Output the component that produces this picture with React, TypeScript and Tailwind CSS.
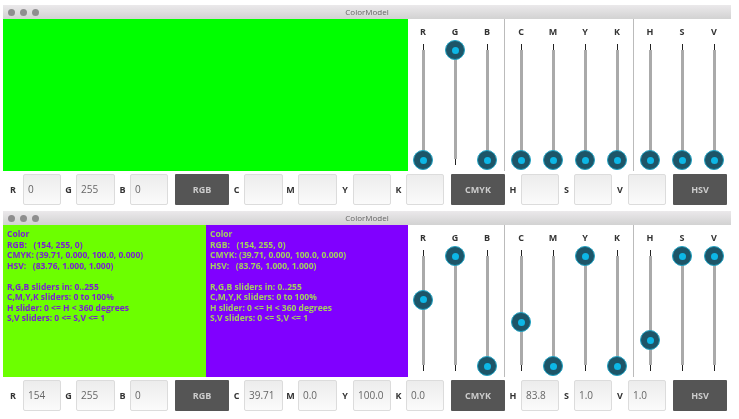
const sans = { fontFamily: '"Open Sans", "DejaVu Sans", sans-serif' };

function TitleBar() {
  return (
    <div className="relative flex h-[14px] items-center gap-[5px] bg-gradient-to-b from-[#ebe9eb] to-[#d2d2d2] pl-[5px]">
      <span className="h-[7px] w-[7px] rounded-full bg-[#8e8e8e]" />
      <span className="h-[7px] w-[7px] rounded-full bg-[#8e8e8e]" />
      <span className="h-[7px] w-[7px] rounded-full bg-[#8e8e8e]" />
      <span className="absolute inset-0 flex items-center justify-center text-[8px] text-[#666]">ColorModel</span>
    </div>
  );
}

function Slider({ label, value }: { label: string; value: number }) {
  return (
    <div className="flex w-[32px] flex-col items-center">
      <div className="flex h-[25px] items-center text-[9px] font-bold text-[#333]">{label}</div>
      <div className="relative h-[121px] w-px bg-[#222]">
        <div className="absolute inset-x-[-1px] top-[6px] bottom-[6px] bg-[#aaa]" />
        <div
          className="absolute left-1/2 flex h-[20px] w-[20px] -translate-x-1/2 -translate-y-1/2 items-center justify-center rounded-full border border-[#1fa3c4] bg-[#1d5568]"
          style={{ top: 6 + (1 - value) * 110 }}
        >
          <div className="h-[7px] w-[7px] rounded-full bg-[#0db7e6]" />
        </div>
      </div>
    </div>
  );
}

function Field({ label, value, labelW, inputW }: { label: string; value: string; labelW: string; inputW: string }) {
  return (
    <>
      <div className={`${labelW} text-center text-[9px] font-bold text-[#333]`}>{label}</div>
      <div className={`${inputW} flex h-full items-center rounded-[2px] border border-[#dcdcdc] bg-gradient-to-b from-[#ececec] to-[#fbfbfb] pl-[4px] text-[10px] text-[#666]`}>
        {value}
      </div>
    </>
  );
}

function ModelButton({ label }: { label: string }) {
  return (
    <div className="ml-[7px] flex h-full w-[54px] items-center justify-center rounded-[1px] bg-[#555] text-[9px] font-bold text-[#ccc]">
      {label}
    </div>
  );
}

function InfoText({ className }: { className: string }) {
  return (
    <pre className={`h-full px-[4px] pt-[4px] text-[8.5px] leading-[10.5px] font-bold ${className}`} style={sans}>
      {`Color
RGB:   (154, 255, 0)
CMYK: (39.71, 0.000, 100.0, 0.000)
HSV:   (83.76, 1.000, 1.000)

R,G,B sliders in: 0..255
C,M,Y,K sliders: 0 to 100%
H slider: 0 <= H < 360 degrees
S,V sliders: 0 <= S,V <= 1`}
    </pre>
  );
}

type Values = {
  r: number; g: number; b: number;
  c: number; m: number; y: number; k: number;
  h: number; s: number; v: number;
  text: string[];
};

function ColorWindow({ vals, children }: { vals: Values; children: React.ReactNode }) {
  const t = vals.text;
  return (
    <div className="w-[728px]">
      <TitleBar />
      <div className="flex h-[152px]">
        <div className="flex w-[405px]">{children}</div>
        <div className="-ml-px flex w-[98px] border-r border-[#bbb]">
          <Slider label="R" value={vals.r} />
          <Slider label="G" value={vals.g} />
          <Slider label="B" value={vals.b} />
        </div>
        <div className="flex w-[129px] border-r border-[#bbb]">
          <Slider label="C" value={vals.c} />
          <Slider label="M" value={vals.m} />
          <Slider label="Y" value={vals.y} />
          <Slider label="K" value={vals.k} />
        </div>
        <div className="flex">
          <Slider label="H" value={vals.h} />
          <Slider label="S" value={vals.s} />
          <Slider label="V" value={vals.v} />
        </div>
      </div>
      <div className="mt-[3px] flex h-[31px] items-center">
        <Field label="R" value={t[0]} labelW="w-[20px]" inputW="w-[38px]" />
        <Field label="G" value={t[1]} labelW="w-[15px]" inputW="w-[39px]" />
        <Field label="B" value={t[2]} labelW="w-[15px]" inputW="w-[38px]" />
        <ModelButton label="RGB" />
        <Field label="C" value={t[3]} labelW="w-[15px]" inputW="w-[39px]" />
        <Field label="M" value={t[4]} labelW="w-[15px]" inputW="w-[39px]" />
        <Field label="Y" value={t[5]} labelW="w-[16px]" inputW="w-[38px]" />
        <Field label="K" value={t[6]} labelW="w-[15px]" inputW="w-[38px]" />
        <ModelButton label="CMYK" />
        <Field label="H" value={t[7]} labelW="w-[16px]" inputW="w-[38px]" />
        <Field label="S" value={t[8]} labelW="w-[15px]" inputW="w-[38px]" />
        <Field label="V" value={t[9]} labelW="w-[16px]" inputW="w-[38px]" />
        <ModelButton label="HSV" />
      </div>
    </div>
  );
}

export default function App() {
  const top: Values = {
    r: 0, g: 1, b: 0, c: 0, m: 0, y: 0, k: 0, h: 0, s: 0, v: 0,
    text: ['0', '255', '0', '', '', '', '', '', '', ''],
  };
  const bottom: Values = {
    r: 154 / 255, g: 1, b: 0, c: 0.397, m: 0, y: 1, k: 0, h: 83.76 / 360, s: 1, v: 1,
    text: ['154', '255', '0', '39.71', '0.0', '100.0', '0.0', '83.8', '1.0', '1.0'],
  };

  return (
    <div className="h-[419px] w-[739px] overflow-hidden bg-white pt-[5px] pl-[3px] blur-[0.6px]" style={sans}>
      <ColorWindow vals={top}>
        <div className="h-full w-full bg-[#00ff00]" />
      </ColorWindow>
      <div className="mt-[6px]">
        <ColorWindow vals={bottom}>
          <InfoText className="w-[203px] bg-[#6cff00] text-[#7a1fd0]" />
          <InfoText className="w-[202px] bg-[#8000ff] text-[#a3d060]" />
        </ColorWindow>
      </div>
    </div>
  );
}
